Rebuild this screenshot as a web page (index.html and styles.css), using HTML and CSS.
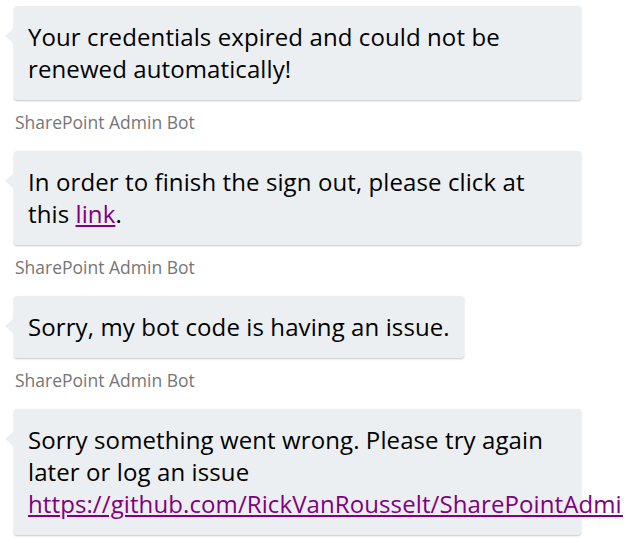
FILE: index.html
```html
<!DOCTYPE html>
<html lang="en">
<head>
<meta charset="utf-8">
<title>SharePoint Admin Bot</title>
<link rel="stylesheet" href="styles.css">
</head>
<body>
<div class="chat">
  <div class="message">
    <div class="bubble">Your credentials expired and could not be renewed automatically!</div>
    <div class="sender">SharePoint Admin Bot</div>
  </div>
  <div class="message">
    <div class="bubble">In order to finish the sign out, please click at this <a class="link" href="#">link</a>.</div>
    <div class="sender">SharePoint Admin Bot</div>
  </div>
  <div class="message">
    <div class="bubble">Sorry, my bot code is having an issue.</div>
    <div class="sender">SharePoint Admin Bot</div>
  </div>
  <div class="message">
    <div class="bubble">Sorry something went wrong. Please try again later or log an issue <a class="link url" href="#">https://github.com/RickVanRousselt/SharePointAdminBot/issues</a></div>
  </div>
</div>
</body>
</html>
```
FILE: styles.css
```css
html, body {
  margin: 0;
  padding: 0;
  background: #ffffff;
}

.chat {
  width: 623px;
  height: 539px;
  overflow: hidden;
  box-sizing: border-box;
  padding: 6px 0 0 14px;
  display: flex;
  flex-direction: column;
}

.message {
  display: flex;
  flex-direction: column;
  align-items: flex-start;
  margin-bottom: 19px;
}

.bubble {
  position: relative;
  max-width: 567px;
  box-sizing: border-box;
  padding: 15px 14px 15px 14px;
  background: #eceff1;
  border-radius: 3px;
  box-shadow: 0 1px 2px rgba(0, 0, 0, 0.22);
  color: #000000;
  font-family: "Open Sans", sans-serif;
  font-size: 24px;
  line-height: 32px;
  letter-spacing: 0.1px;
}

.bubble::before {
  content: "";
  position: absolute;
  left: -9px;
  top: 22px;
  border-style: solid;
  border-width: 8px 9px 8px 0;
  border-color: transparent #eceff1 transparent transparent;
}

.link {
  color: #800080;
  text-decoration: underline;
}

.url {
  white-space: nowrap;
}

.sender {
  margin-top: 12px;
  padding-left: 1px;
  font-family: "Open Sans", sans-serif;
  font-size: 17.5px;
  line-height: 20px;
  color: #767676;
}
```
